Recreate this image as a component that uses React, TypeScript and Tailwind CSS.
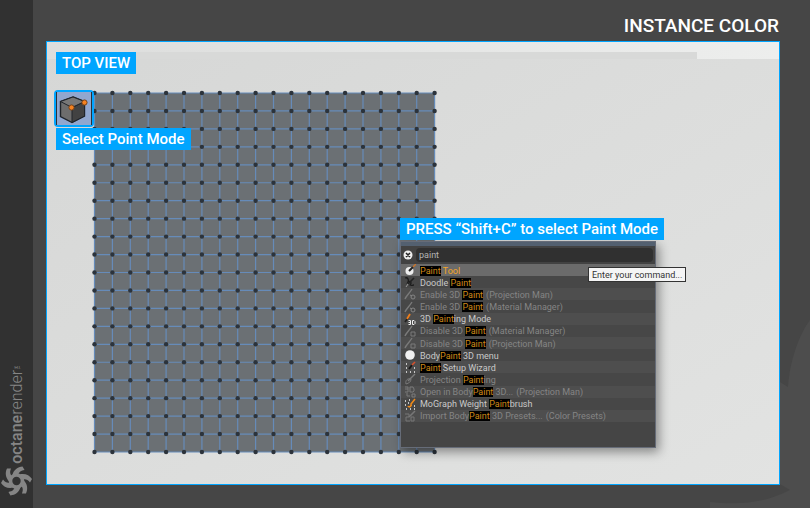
import type { ReactNode } from "react";

type Command = {
  before?: string;
  match: string;
  after?: string;
  note?: string;
  icon: string;
  enabled?: boolean;
};

const commands: Command[] = [
  { match: "Paint", after: " Tool", icon: "tool", enabled: true },
  { before: "Doodle ", match: "Paint", icon: "doodle", enabled: true },
  { before: "Enable 3D ", match: "Paint", note: "(Projection Man)", icon: "enable" },
  { before: "Enable 3D ", match: "Paint", note: "(Material Manager)", icon: "enable" },
  { before: "3D ", match: "Paint", after: "ing Mode", icon: "mode", enabled: true },
  { before: "Disable 3D ", match: "Paint", note: "(Material Manager)", icon: "disable" },
  { before: "Disable 3D ", match: "Paint", note: "(Projection Man)", icon: "disable" },
  { before: "Body", match: "Paint", after: " 3D menu", icon: "menu", enabled: true },
  { match: "Paint", after: " Setup Wizard", icon: "wizard", enabled: true },
  { before: "Projection ", match: "Paint", after: "ing", icon: "projection" },
  { before: "Open in Body", match: "Paint", after: " 3D...", note: "(Projection Man)", icon: "open" },
  { before: "MoGraph Weight ", match: "Paint", after: "brush", icon: "mograph", enabled: true },
  { before: "Import Body", match: "Paint", after: " 3D Presets...", note: "(Color Presets)", icon: "import" },
];

const icons: Record<string, ReactNode> = {
  tool: (
    <>
      <circle cx="5.5" cy="7" r="4" fill="#eee" />
      <path d="M5 7 L9 3" stroke="#222" strokeWidth="2" />
      <path d="M9 3 L12 0" stroke="#c9752a" strokeWidth="1.4" />
    </>
  ),
  doodle: (
    <>
      <path d="M1 2 C4 1 5 4 4 6 C7 4 8 7 6 9 C8 10 9 9 10 9" stroke="#1c1c1c" strokeWidth="1.3" fill="none" />
      <path d="M4 8 L10 2" stroke="#222" strokeWidth="1.6" />
      <path d="M2 11 L4 8" stroke="#999" />
    </>
  ),
  enable: (
    <>
      <path d="M1 11 C2 8 5 6 8 1" stroke="#7a7a7a" strokeWidth="1.4" fill="none" />
      <circle cx="9" cy="9" r="2" stroke="#858585" fill="none" />
      <path d="M6 7 L8 8" stroke="#858585" />
    </>
  ),
  disable: (
    <>
      <path d="M1 11 C2 8 5 6 8 1" stroke="#7a7a7a" strokeWidth="1.4" fill="none" />
      <path d="M7 7h4v4H7z" stroke="#7a7a7a" fill="none" />
    </>
  ),
  mode: (
    <>
      <path d="M1 9 L4 5" stroke="#222" strokeWidth="1.8" />
      <path d="M3 6 L6 1" stroke="#ef7d1a" strokeWidth="1.8" />
      <path d="M4.5 7.5h2v4h-2M4.5 9.5h2M8.5 7.5h1.5l1 1v2l-1 1H8.5z" stroke="#eee" fill="none" />
    </>
  ),
  menu: <circle cx="6" cy="6" r="4.8" fill="#f0f0f0" />,
  wizard: (
    <>
      <path d="M2 3h1M2 7h1M2 11h1M6 11h1M10 11h1M10 7h1" stroke="#eee" strokeWidth="1.4" />
      <path d="M5 8 L8 4" stroke="#171717" strokeWidth="2" />
      <path d="M8 4 L11 1" stroke="#d8502c" strokeWidth="1.6" />
    </>
  ),
  projection: (
    <>
      <path d="M2 11 C1 7 4 5 7 6 C7 9 5 10 2 11" stroke="#7a7a7a" fill="none" />
      <path d="M4 8 L11 1" stroke="#7a7a7a" strokeWidth="1.5" />
    </>
  ),
  open: <path d="M1 1h3v5H1M1 3h3M6 1h3l1 2v2L9 6H6V1M3 7v3h3M8 8h3v3H8z" stroke="#7a7a7a" fill="none" />,
  mograph: (
    <>
      <path d="M1 3h1M5 2h1M1 7h1M2 11h1M6 11h1M10 8h1M10 11h1M4 5h1" stroke="#eee" strokeWidth="1.5" />
      <path d="M4 8 C5 10 8 8 7 6 L11 1" stroke="#f08a18" strokeWidth="1.6" fill="none" />
    </>
  ),
  import: (
    <>
      <path d="M1 4h4v3H2v4h4M7 7h3v4H7z" stroke="#777" fill="none" />
      <path d="M5 7 L11 1" stroke="#777" strokeWidth="1.6" />
    </>
  ),
};

const columns = Array.from({ length: 20 }, (_, i) => 3.5 + i * 17.9);
const rows = Array.from({ length: 21 }, (_, i) => 3 + i * 17.95);

function PointGrid() {
  return (
    <svg width="347" height="365" className="block">
      <rect x="3.5" y="3" width="340" height="359" fill="#6b7074" />
      {columns.map((x) => (
        <path key={x} d={`M${x} 3V362`} stroke="#668bb9" strokeWidth="1.2" />
      ))}
      {rows.map((y) => (
        <path key={y} d={`M3.5 ${y}H343.5`} stroke="#668bb9" strokeWidth="1.2" />
      ))}
      {rows.map((y) =>
        columns.map((x) => <circle key={`${x}-${y}`} cx={x} cy={y} r="2.2" fill="#2c333b" />),
      )}
    </svg>
  );
}

function Label({ children }: { children: ReactNode }) {
  return (
    <div className="h-[22px] w-max bg-[#00a5ff] px-1.5 text-[15px] leading-[22px] font-medium whitespace-nowrap text-white">
      {children}
    </div>
  );
}

function CubeIcon() {
  return (
    <svg width="36" height="33" viewBox="0 0 36 33" className="shrink-0">
      <path d="M.5 0V33M35.5 0V33" stroke="#2a3038" />
      <path d="M17 5 L28.5 9.5 V24 L16 30.5 L4.5 24.5 V9.5Z" fill="#6d6d6d" stroke="#20252b" strokeWidth="1.4" />
      <path d="M16 15.5 L28.5 9.5 V24 L16 30.5Z" fill="#424242" stroke="#20252b" />
      <path d="M4.5 9.5 L16 15.5 L28.5 9.5 L17 5Z" fill="#777" stroke="#20252b" />
      <circle cx="15.5" cy="15.5" r="2.6" fill="#f58220" stroke="#7a4318" />
      <circle cx="28.5" cy="10.5" r="2.6" fill="#f58220" stroke="#7a4318" />
    </svg>
  );
}

function CommandRow({ command, index }: { command: Command; index: number }) {
  const { before, match, after, note, icon, enabled } = command;
  const background =
    index === 0 ? "bg-[#6b6b6b]" : index % 2 ? "bg-[#474747]" : "bg-[#4e4e4e]";
  const color =
    index === 0 ? "text-[#f3a629]" : enabled ? "text-[#c9c9c9]" : "text-[#858585]";

  return (
    <li className={`flex min-h-0 ${background}`}>
      <button
        type="button"
        disabled={!enabled}
        className={`flex w-full items-center gap-1 pl-[3px] text-left text-[9px] leading-3 whitespace-pre ${color}`}
      >
        <svg width="12" height="12" fill="none" className="shrink-0" aria-hidden="true">
          {icons[icon]}
        </svg>
        <span className="pt-px">
          {before}
          <mark className="bg-black text-[#d08a18]">{match}</mark>
          {after}
          {note ? <span className="ml-[3px]">{note}</span> : null}
        </span>
      </button>
    </li>
  );
}

function Commander() {
  return (
    <div className="h-[207px] w-64 border border-[#666c78] bg-[#454545] shadow-[3px_4px_10px_rgba(0,0,0,0.4)]">
      <div className="h-1 bg-[#536070]" />
      <div className="flex h-[18px] items-center gap-[3px] bg-[#424242] px-0.5">
        <button type="button" aria-label="Clear" className="shrink-0">
          <svg width="10" height="10" className="block">
            <circle cx="5" cy="5" r="4.5" fill="#eee" />
            <path d="M3 3l4 4M7 3l-4 4" stroke="#222" strokeWidth="1.5" />
          </svg>
        </button>
        <input
          aria-label="Command"
          defaultValue="paint"
          className="h-3.5 min-w-0 flex-1 rounded-sm bg-[#303030] px-[3px] text-[9px] text-[#b5b5b5] outline-none"
        />
      </div>
      <ul className="grid h-[158px] auto-rows-fr">
        {commands.map((command, i) => (
          <CommandRow key={i} command={command} index={i} />
        ))}
      </ul>
    </div>
  );
}

function Brand() {
  return (
    <div className="flex flex-col items-center gap-0.5">
      <div className="flex rotate-180 text-[16px] leading-[22px] text-[#858585] [writing-mode:vertical-rl]">
        <span className="font-medium">octane</span>
        <span className="font-light">render</span>
        <span className="font-['DejaVu_Sans',sans-serif] text-[9px]">™</span>
      </div>
      <svg width="33" height="30" viewBox="-16.5 -15 33 30">
        <circle r="6" fill="none" stroke="#858585" strokeWidth="3.6" />
        {[0, 60, 120, 180, 240, 300].map((angle) => (
          <path
            key={angle}
            transform={`rotate(${angle})`}
            d="M3 -6.5 C8 -8 13 -6 15.5 -2 L13.5 1.5 C11 -2 8 -2.5 5 -1Z"
            fill="#858585"
          />
        ))}
      </svg>
    </div>
  );
}

function Watermark() {
  return (
    <svg width="100" height="188" className="absolute right-0 bottom-0" aria-hidden="true">
      <path
        d="M100 0 C89 15 80 40 78 67 L70 62 V164 L80 170 C55 183 30 185 0 182 V188 H100Z"
        fill="#4d4d4d"
      />
    </svg>
  );
}

export default function App() {
  return (
    <div className="relative flex min-h-screen bg-[#464646] font-[Roboto,sans-serif]">
      <Watermark />
      <aside className="flex w-[33px] shrink-0 flex-col justify-end bg-[#313131] pb-3">
        <Brand />
      </aside>
      <main className="flex min-w-0 flex-1 flex-col pr-[30px] pb-[23px] pl-[13px]">
        <h1 className="h-[41px] pt-3.5 pr-px text-right text-[19px] leading-6 font-medium text-white">
          INSTANCE COLOR
        </h1>
        <section className="relative flex-1 border border-[#00a5ff] bg-linear-to-br from-[#d6d7d6] to-[#e2e3e2]">
          <div className="flex h-[17px] items-start bg-linear-to-r from-[#dcdddc] to-[#edeeed]">
            <div className="mt-2.5 ml-[9px] h-[7px] flex-1 bg-[#d8d9d8]" />
            <div className="w-[82px]" />
          </div>
          <div className="absolute top-12 left-11">
            <PointGrid />
          </div>
          <div className="absolute top-2.5 left-[9px]">
            <Label>TOP VIEW</Label>
          </div>
          <button
            type="button"
            aria-label="Point mode"
            className="absolute top-12 left-[7px] flex h-[37px] w-10 items-center justify-center rounded-sm border-2 border-[#00a5ff] bg-[#91a7cf]"
          >
            <CubeIcon />
          </button>
          <div className="absolute top-[86px] left-[9px]">
            <Label>Select Point Mode</Label>
          </div>
          <div className="absolute top-[199px] left-[353px]">
            <Commander />
          </div>
          <div className="absolute top-44 left-[353px]">
            <Label>PRESS “Shift+C” to select Paint Mode</Label>
          </div>
          <div
            role="tooltip"
            className="absolute top-[225px] left-[541px] h-[15px] border border-[#333] bg-[#f5f5f5] px-[3px] text-[9px] leading-[14px] whitespace-nowrap text-[#333]"
          >
            Enter your command...
          </div>
        </section>
      </main>
    </div>
  );
}
